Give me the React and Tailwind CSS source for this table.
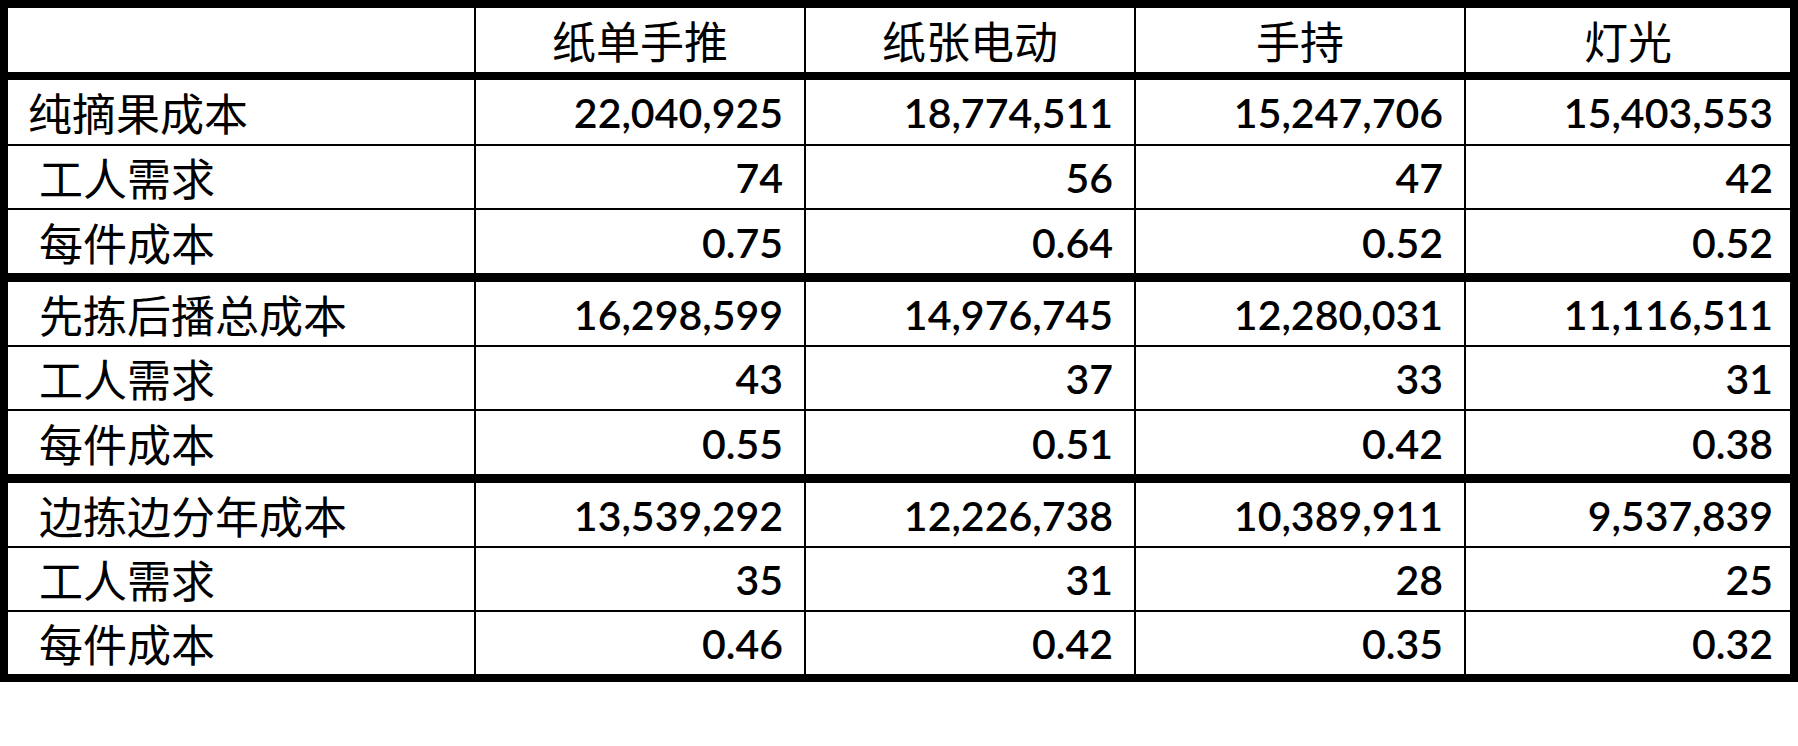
import React from "react";

const cjk = { fontFamily: '"Noto Sans CJK SC", "Noto Sans CJK JP", sans-serif' };

const groups = [
  {
    gapClass: "mt-[8px]",
    rows: [
      { label: "纯摘果成本", indent: false, h: "h-[64px]", vals: ["22,040,925", "18,774,511", "15,247,706", "15,403,553"] },
      { label: "工人需求", indent: true, h: "h-[62px]", vals: ["74", "56", "47", "42"] },
      { label: "每件成本", indent: true, h: "h-[63px]", vals: ["0.75", "0.64", "0.52", "0.52"] },
    ],
  },
  {
    gapClass: "mt-[9px]",
    rows: [
      { label: "先拣后播总成本", indent: true, h: "h-[63px]", vals: ["16,298,599", "14,976,745", "12,280,031", "11,116,511"] },
      { label: "工人需求", indent: true, h: "h-[62px]", vals: ["43", "37", "33", "31"] },
      { label: "每件成本", indent: true, h: "h-[63px]", vals: ["0.55", "0.51", "0.42", "0.38"] },
    ],
  },
  {
    gapClass: "mt-[9px]",
    rows: [
      { label: "边拣边分年成本", indent: true, h: "h-[63px]", vals: ["13,539,292", "12,226,738", "10,389,911", "9,537,839"] },
      { label: "工人需求", indent: true, h: "h-[62px]", vals: ["35", "31", "28", "25"] },
      { label: "每件成本", indent: true, h: "h-[62px]", vals: ["0.46", "0.42", "0.35", "0.32"] },
    ],
  },
];

const headers = ["纸单手推", "纸张电动", "手持", "灯光"];

function Row({ row }) {
  return (
    <div className={`grid grid-cols-[466px_328px_328px_328px_324px] gap-x-[2px] ${row.h}`}>
      <div
        className={`bg-white flex items-center text-[44px] leading-none text-black ${row.indent ? "pl-[31px]" : "pl-[20px]"}`}
        style={cjk}
      >
        {row.label}
      </div>
      {row.vals.map((v, i) => (
        <div
          key={i}
          className={`bg-white flex items-center justify-end pt-[1px] text-[41px] leading-none text-black font-['Lato',sans-serif] font-semibold ${i === 3 ? "pr-[17px]" : "pr-[21px]"}`}
        >
          {v}
        </div>
      ))}
    </div>
  );
}

export default function App() {
  return (
    <div className="w-[1798px] h-[746px] bg-white">
      <div className="w-[1798px] border-[8px] border-black bg-black flex flex-col">
        <div className="grid grid-cols-[466px_328px_328px_328px_324px] gap-x-[2px] h-[64px]">
          <div className="bg-white" />
          {headers.map((h) => (
            <div
              key={h}
              className="bg-white flex items-center justify-center text-[44px] leading-none text-black"
              style={cjk}
            >
              {h}
            </div>
          ))}
        </div>
        {groups.map((g, gi) => (
          <div key={gi} className={`flex flex-col gap-y-[2px] ${g.gapClass}`}>
            {g.rows.map((r, ri) => (
              <Row key={ri} row={r} />
            ))}
          </div>
        ))}
      </div>
    </div>
  );
}
